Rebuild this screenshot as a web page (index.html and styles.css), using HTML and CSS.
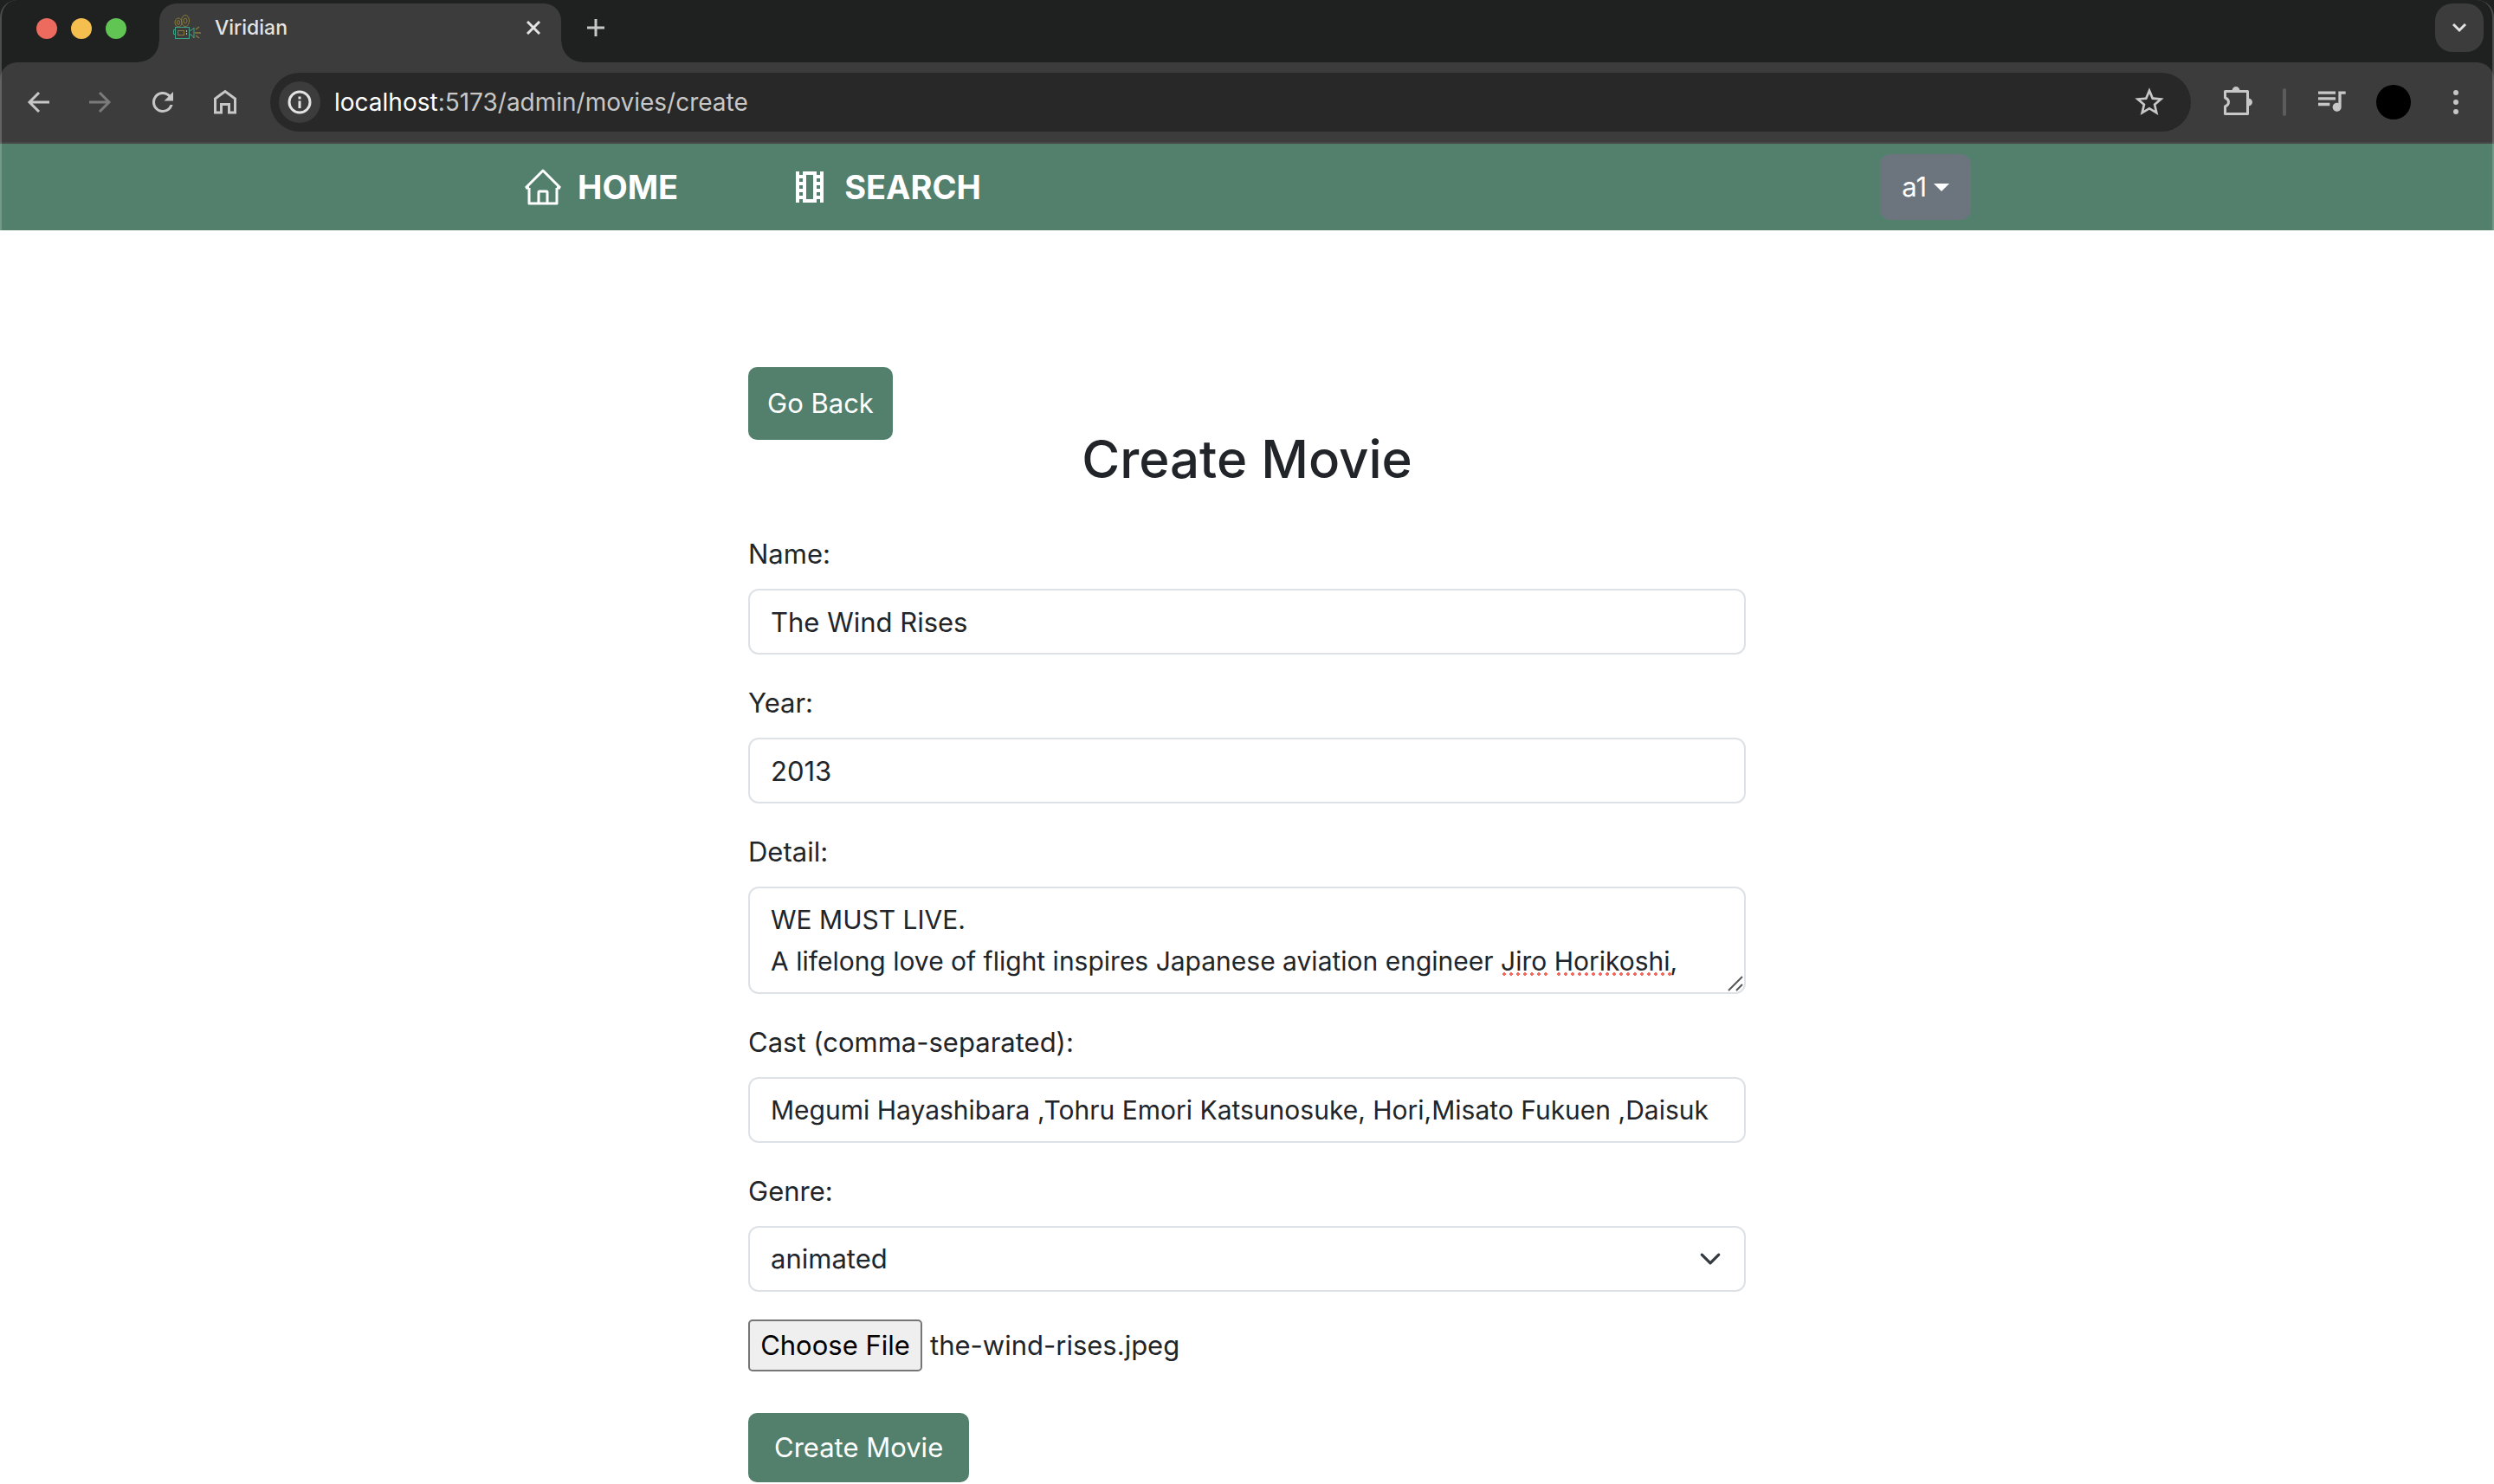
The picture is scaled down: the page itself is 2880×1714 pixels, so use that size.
FILE: index.html
```html
<!DOCTYPE html>
<html lang="en">
<head>
<meta charset="utf-8">
<title>Viridian</title>
<link rel="stylesheet" href="styles.css">
</head>
<body>
<div class="window">
  <header class="browser">
    <div class="tabstrip">
      <div class="lights">
        <span class="light light-close"></span>
        <span class="light light-min"></span>
        <span class="light light-max"></span>
      </div>
      <div class="tab">
        <svg class="favicon" viewBox="0 0 32 32" fill="none">
          <g stroke="#8a7a38" stroke-width="1">
            <ellipse cx="6" cy="10" rx="4" ry="5"/><ellipse cx="6" cy="10" rx="1.5" ry="2.5"/>
            <ellipse cx="14" cy="8" rx="4.500" ry="6.500"/><ellipse cx="14" cy="8" rx="2" ry="3"/>
            <rect x="5.500" y="19.500" width="7" height="5"/>
            <path d="M26 18l4-3M25 22h7M26 25l4 3" stroke-width="1.5"/>
            <path d="M15.500 19v5" stroke="#d8c35a" stroke-dasharray="2 1"/>
          </g>
          <g stroke="#3fa287" stroke-width="1">
            <rect x="2.500" y="15.500" width="16" height="13"/>
            <path d="M2 18.500H0.500v5H2M19 19h2l3-3v12l-3-4h-2"/>
          </g>
        </svg>
        <span class="tab-title">Viridian</span>
        <button class="bare" aria-label="Close tab"><svg class="i16" viewBox="0 0 16 16" fill="none" stroke="#e3e3e3" stroke-width="3"><path d="M1 1l14 14M15 1L1 15"/></svg></button>
      </div>
      <button class="bare newtab" aria-label="New tab"><svg class="i20" viewBox="0 0 20 20" fill="none" stroke="#c7c7c7" stroke-width="3"><path d="M10 0v20M0 10h20"/></svg></button>
      <button class="tabsearch" aria-label="Search tabs"><svg class="i16" viewBox="0 0 16 16" fill="none" stroke="#e3e3e3" stroke-width="3"><path d="M1 4l7 7 7-7"/></svg></button>
    </div>
    <div class="toolbar">
      <div class="tools">
        <button class="bare" aria-label="Back"><svg class="i36" viewBox="0 0 36 36" fill="none" stroke="#c7c7c7" stroke-width="3"><path d="M31 18H8M19 7L8 18l11 11"/></svg></button>
        <button class="bare" aria-label="Forward"><svg class="i36" viewBox="0 0 36 36" fill="none" stroke="#7b7b7b" stroke-width="3"><path d="M5 18h23M17 7l11 11-11 11"/></svg></button>
        <button class="bare" aria-label="Reload"><svg class="i36" viewBox="0 0 24 24" fill="#c7c7c7"><path d="M17.650 6.350A8 8 0 1 0 19.730 14h-2.080A6 6 0 1 1 12 6c1.660 0 3.140.69 4.220 1.780L13 11h7V4z"/></svg></button>
        <button class="bare" aria-label="Home"><svg class="i36" viewBox="0 0 36 36" fill="none" stroke="#c7c7c7" stroke-width="3"><path d="M6.500 30V14L18 5.500 29.500 14v16H22.500V20.500h-9V30z"/></svg></button>
      </div>
      <div class="omnibox">
        <button class="siteinfo" aria-label="Site information"><svg class="i28" viewBox="0 0 28 28" fill="none" stroke="#e3e3e3" stroke-width="3"><circle cx="14" cy="14" r="12"/><path d="M14 12.500V21M14 7.500v3"/></svg></button>
        <div class="url"><b>localhost</b>:5173/admin/movies/create</div>
        <button class="bare" aria-label="Bookmark"><svg class="i40" viewBox="0 0 24 24" fill="#c7c7c7"><path d="M22 9.240l-7.190-.62L12 2 9.190 8.630 2 9.240l5.460 4.730L5.820 21 12 17.270 18.180 21l-1.630-7.030zM12 15.400l-3.760 2.270 1-4.280-3.320-2.880 4.380-.38L12 6.100l1.710 4.040 4.380.38-3.320 2.880 1 4.280z"/></svg></button>
      </div>
      <div class="actions">
        <button class="bare" aria-label="Extensions"><svg class="i40" viewBox="0 0 40 40"><path d="M5.500 7.500h26v26h-26v-8.500q4-1.500 4-5t-4-5z" fill="none" stroke="#c7c7c7" stroke-width="3" stroke-linejoin="round"/><path d="M13.500 7a4.500 5 0 0 1 9 0zM32 15.500a5 4.500 0 0 1 0 9z" fill="#c7c7c7"/></svg></button>
        <span class="divider"></span>
        <button class="bare" aria-label="Media controls"><svg class="i40" viewBox="0 1.500 24 24" fill="#c7c7c7"><path d="M22 6h-5v8.180c-.31-.11-.65-.18-1-.18-1.660 0-3 1.340-3 3s1.340 3 3 3 3-1.340 3-3V8h3zM15 6H3v2h12zM15 10H3v2h12zM11 14H3v2h8z"/></svg></button>
        <span class="avatar"></span>
        <button class="bare" aria-label="Menu"><svg class="i36" viewBox="0 0 36 36" fill="#c7c7c7"><circle cx="18" cy="7" r="3"/><circle cx="18" cy="18" r="3"/><circle cx="18" cy="29" r="3"/></svg></button>
      </div>
    </div>
  </header>

  <nav class="sitenav">
    <div class="container">
      <a class="navlink" href="#home"><svg class="i44" viewBox="0 0 44 44" fill="none" stroke="#fff" stroke-width="3" stroke-linejoin="round"><path d="M6 23v18h32V23M2 23L22 3l20 20M2 23h4M38 23h4M17 41V28q0-1 1-1h8q1 0 1 1v13"/></svg>HOME</a>
      <a class="navlink" href="#search"><svg class="i44" viewBox="0 0 44 44" fill="#fff" fill-rule="evenodd"><path d="M6 4h4v4h4V4h16v4h4V4h4v36h-4v-4h-4v4H14v-4h-4v4H6zM18 8v28h8V8zM10 12v4h4v-4zM10 20v4h4v-4zM10 28v4h4v-4zM30 12v4h4v-4zM30 20v4h4v-4zM30 28v4h4v-4z"/></svg>SEARCH</a>
      <button class="usermenu">a1<span class="caret"></span></button>
    </div>
  </nav>

  <main class="page">
    <button class="btn back" type="button">Go Back</button>
    <h1>Create Movie</h1>
    <form class="form">
      <div class="field">
        <label for="name">Name:</label>
        <input class="control" id="name" type="text" value="The Wind Rises">
      </div>
      <div class="field">
        <label for="year">Year:</label>
        <input class="control" id="year" type="text" value="2013">
      </div>
      <div class="field">
        <label for="detail">Detail:</label>
        <div class="detail">
          <textarea class="control long area" id="detail" rows="2" spellcheck="false">WE MUST LIVE.
A lifelong love of flight inspires Japanese aviation engineer Jiro Horikoshi,</textarea>
          <span class="misspelt misspelt-first"></span>
          <span class="misspelt misspelt-last"></span>
          <svg class="grip" viewBox="0 0 18 18" fill="none" stroke="#555" stroke-width="2"><path d="M1 17L17 1M10 17l7-7"/></svg>
        </div>
      </div>
      <div class="field">
        <label for="cast">Cast (comma-separated):</label>
        <input class="control long" id="cast" type="text" value="Megumi Hayashibara ,Tohru Emori Katsunosuke, Hori,Misato Fukuen ,Daisuk">
      </div>
      <div class="field">
        <label for="genre">Genre:</label>
        <div class="detail">
          <select class="control" id="genre"><option>animated</option></select>
          <svg class="arrow" viewBox="0 0 16 16" fill="none" stroke="#343a40" stroke-width="2" stroke-linecap="round" stroke-linejoin="round"><path d="M2 5l6 6 6-6"/></svg>
        </div>
      </div>
      <div class="filerow">
        <input class="file" id="image" type="file" aria-label="Movie image">
        <label for="image">the-wind-rises.jpeg</label>
      </div>
      <button class="btn submit" type="button">Create Movie</button>
    </form>
  </main>
</div>
</body>
</html>
```
FILE: styles.css
```css
* { box-sizing: border-box; }
body {
  margin: 0;
  background: #fff;
  color: #212529;
  font-family: Inter, "Liberation Sans", sans-serif;
  font-size: 31px;
  line-height: 48px;
}
button, input, textarea, select { font: inherit; color: inherit; margin: 0; }
button { cursor: pointer; }
svg { display: block; flex: none; }
.i16 { width: 16px; height: 16px; }
.i20 { width: 20px; height: 20px; }
.i28 { width: 28px; height: 28px; }
.i36 { width: 36px; height: 36px; }
.i40 { width: 40px; height: 40px; }
.i44 { width: 44px; height: 44px; }
.bare { display: flex; padding: 0; border: 0; background: none; }

/* browser frame */
.window { position: relative; min-height: 100vh; }
.window::after {
  content: "";
  position: absolute;
  inset: 0;
  border: solid rgba(255, 255, 255, 0.2);
  border-width: 0 2px;
  border-radius: 20px 20px 0 0;
  pointer-events: none;
}
.browser { background: #1f2121; color: #e3e3e3; }
.tabstrip { display: flex; align-items: flex-start; height: 72px; padding: 4px 12px 0 42px; }
.lights { display: flex; gap: 16px; width: 142px; padding-top: 17px; }
.light { width: 24px; height: 24px; border-radius: 50%; }
.light-close { background: #ed6a5e; }
.light-min { background: #f5bf4f; }
.light-max { background: #61c554; }
.tab {
  position: relative;
  display: flex;
  align-items: center;
  width: 464px;
  height: 68px;
  padding: 0 24px 12px 16px;
  border-radius: 20px 20px 0 0;
  background: #3c3c3c;
}
.tab::before, .tab::after {
  content: "";
  position: absolute;
  bottom: 0;
  width: 24px;
  height: 24px;
}
.tab::before { left: -24px; background: radial-gradient(circle at 0 0, transparent 23px, #3c3c3c 24px); }
.tab::after { right: -24px; background: radial-gradient(circle at 100% 0, transparent 23px, #3c3c3c 24px); }
.favicon { width: 32px; height: 32px; }
.tab-title { flex: 1; padding-left: 16px; font-size: 23px; font-weight: 500; }
.newtab { margin: 18px 0 0 30px; }
.tabsearch {
  display: flex;
  align-items: center;
  justify-content: center;
  width: 56px;
  height: 56px;
  margin-left: auto;
  padding: 0;
  border: 0;
  border-radius: 20px;
  background: #3c3c3c;
}
.toolbar {
  display: flex;
  align-items: center;
  gap: 34px;
  height: 94px;
  padding: 0 26px;
  border-bottom: 2px solid #474747;
  border-radius: 20px 20px 0 0;
  background: #3c3c3c;
}
.tools { display: flex; gap: 36px; }
.omnibox {
  flex: 1;
  display: flex;
  align-items: center;
  height: 68px;
  padding: 0 28px 0 10px;
  border-radius: 34px;
  background: #282828;
}
.siteinfo {
  display: flex;
  align-items: center;
  justify-content: center;
  width: 48px;
  height: 48px;
  padding: 0;
  border: 0;
  border-radius: 50%;
  background: #3c3c3c;
}
.url { flex: 1; padding-left: 16px; color: #c7c7c7; font-size: 28px; }
.url b { color: #fff; font-weight: 400; }
.actions { display: flex; align-items: center; }
.divider { width: 4px; height: 32px; margin: 0 32px; border-radius: 2px; background: #5c5c5c; }
.avatar { width: 40px; height: 40px; margin: 0 34px 0 32px; border-radius: 50%; background: #000; }

/* site navigation */
.sitenav { background: #52806d; color: #fff; }
.container { display: flex; align-items: center; max-width: 1680px; height: 100px; margin: 0 auto; padding: 0 4px 0 5px; }
.navlink {
  display: flex;
  align-items: center;
  gap: 18px;
  margin-right: 130px;
  color: inherit;
  font-size: 38px;
  font-weight: 700;
  text-decoration: none;
}
.usermenu {
  display: flex;
  align-items: center;
  gap: 8px;
  height: 76px;
  margin-left: auto;
  padding: 0 25px;
  border: 0;
  border-radius: 12px;
  background: #6c757d;
}
.caret { border: 9px solid transparent; border-top-color: #fff; border-bottom: 0; }

/* create form */
.page { max-width: 1152px; margin: 0 auto; padding-top: 158px; }
.btn { display: block; border: 0; border-radius: 10px; background: #52806d; color: #fff; }
.back { height: 84px; padding: 0 22px; }
h1 { margin: -16px 0 48px; font-size: 60px; font-weight: 500; line-height: 76px; text-align: center; }
.field { display: flex; flex-direction: column; gap: 16px; margin-bottom: 32px; }
.control {
  display: block;
  width: 100%;
  height: 76px;
  padding: 12px 24px;
  border: 2px solid #dee2e6;
  border-radius: 12px;
  background: #fff;
  appearance: none;
}
.long { font-size: 30px; }
.area { height: 124px; overflow: hidden; resize: none; }
.detail { position: relative; }
.misspelt {
  position: absolute;
  top: 99px;
  height: 4px;
  background: radial-gradient(circle, #f4695f 2px, transparent 2px) 0 0 / 8px 4px;
}
.misspelt-first { left: 869px; width: 56px; }
.misspelt-last { left: 932px; width: 134px; }
.grip { position: absolute; right: 3px; bottom: 3px; width: 18px; height: 18px; }
.arrow { position: absolute; right: 28px; top: 25px; width: 26px; height: 26px; pointer-events: none; }
.filerow { display: flex; align-items: center; gap: 9px; height: 60px; margin-bottom: 48px; }
.file { width: 201px; height: 60px; overflow: hidden; }
.file::file-selector-button {
  width: 201px;
  height: 60px;
  margin: 0;
  padding: 0;
  border: 2px solid #767676;
  border-radius: 5px;
  background: #efefef;
  color: #000;
  font: inherit;
}
.submit { height: 80px; padding: 0 30px; }
```
